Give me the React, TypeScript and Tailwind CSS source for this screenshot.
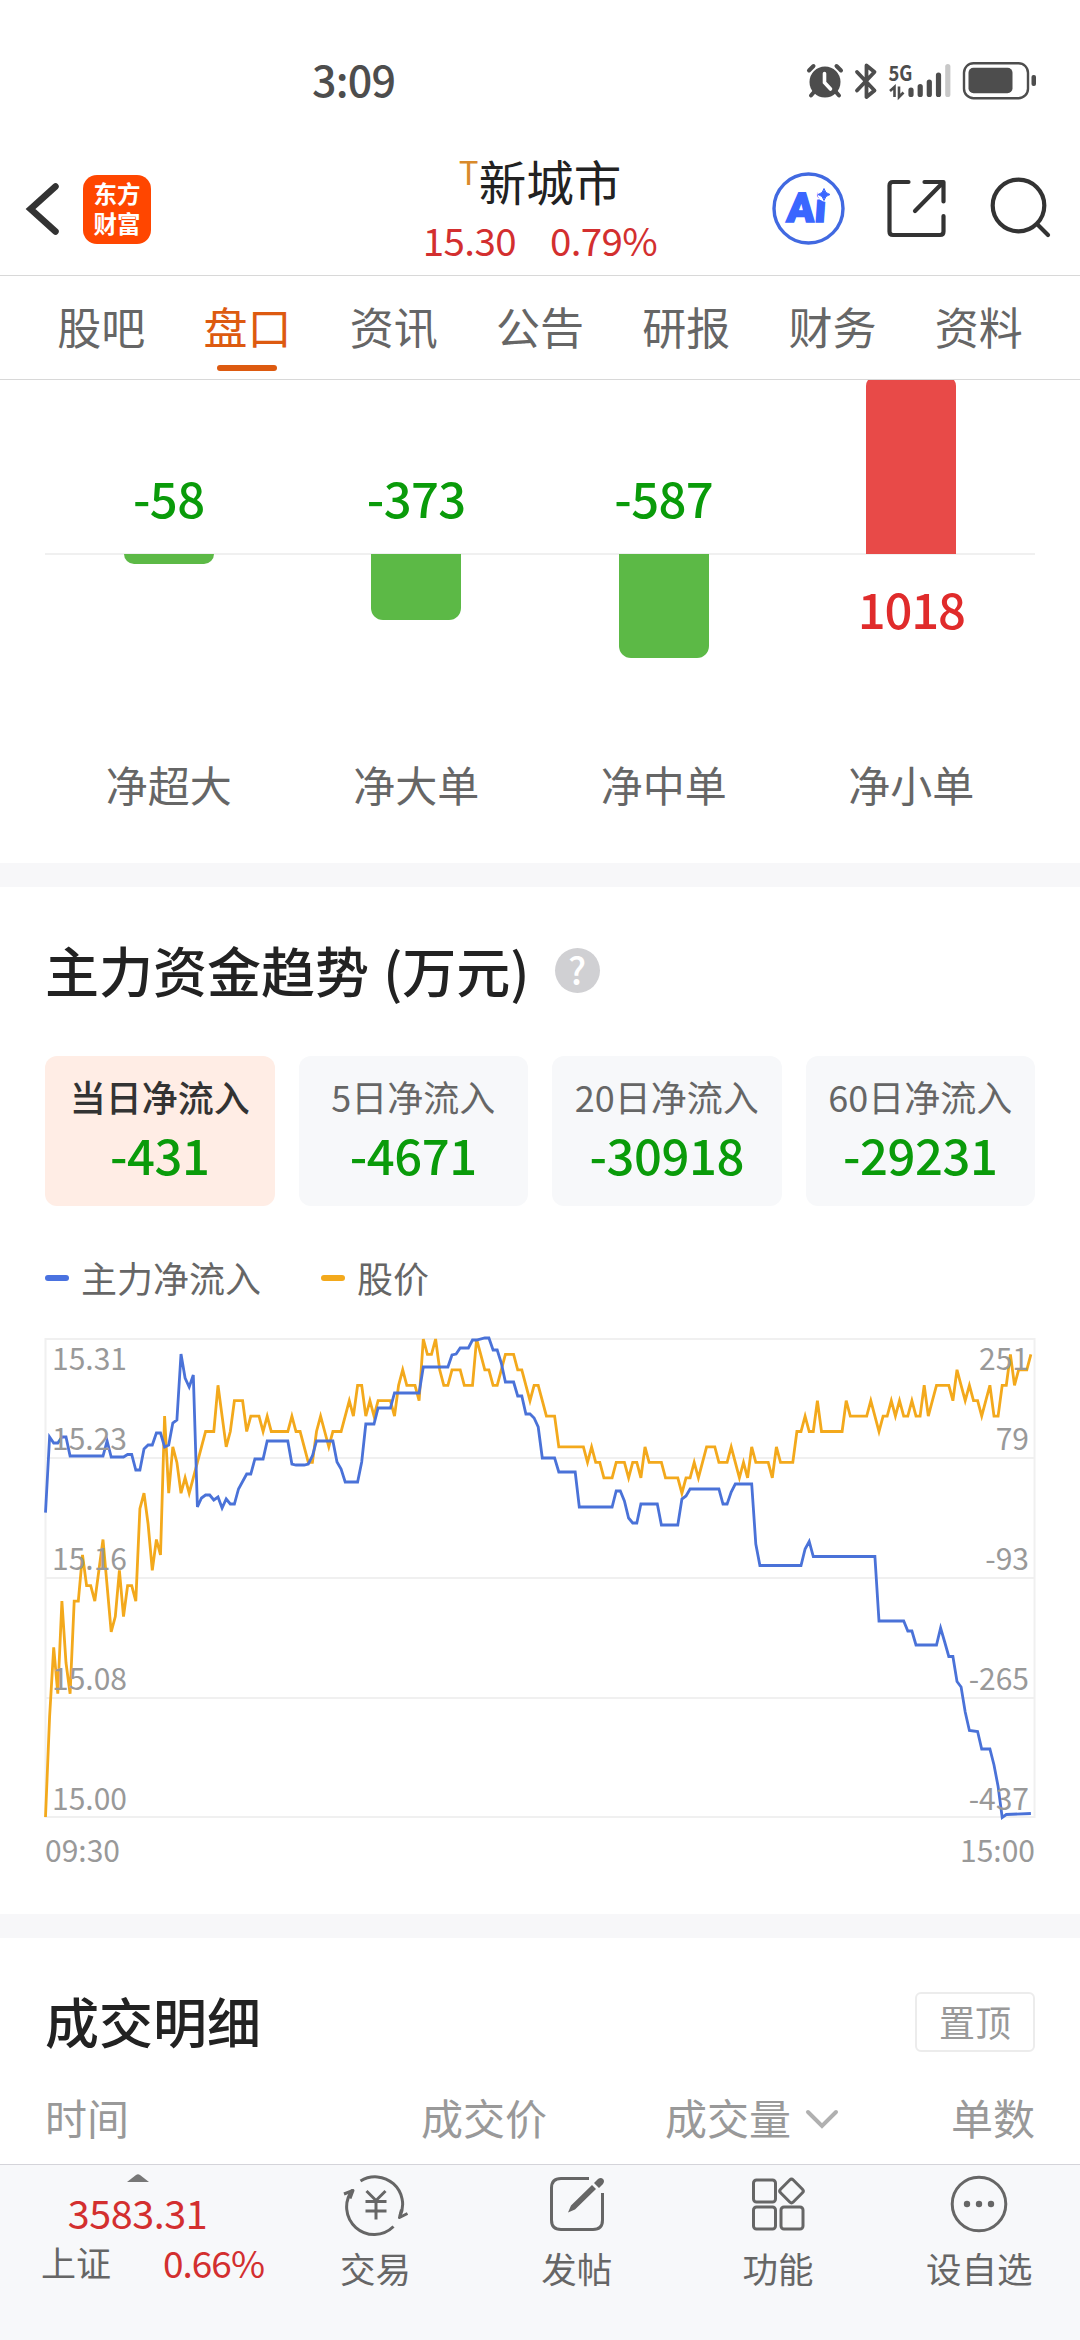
import type { ReactNode } from "react";

const tabs = ["股吧", "盘口", "资讯", "公告", "研报", "财务", "资料"];

const orders = [
  { label: "净超大", value: -58, bar: "h-[10px]" },
  { label: "净大单", value: -373, bar: "h-[66px]" },
  { label: "净中单", value: -587, bar: "h-[104px]" },
  { label: "净小单", value: 1018, bar: "h-[178px]" },
];

const periods = [
  { label: "当日净流入", value: "-431" },
  { label: "5日净流入", value: "-4671" },
  { label: "20日净流入", value: "-30918" },
  { label: "60日净流入", value: "-29231" },
];

// [minute, ticks below the day's high]
const price: number[][] = [
  [0, 31], [1, 24.5], [2, 20], [3, 23], [4, 17], [5, 21], [6, 23], [7, 17], [8, 17], [9, 14], [10, 16], [11, 16],
  [12, 17], [13, 15], [14, 13], [15, 16], [16, 19], [17, 18], [18, 15], [19, 18], [20, 16], [21, 16], [22, 17],
  [23, 11], [24, 10], [25, 12], [26, 15], [27, 13], [28, 14], [29, 5], [30, 10], [31, 7], [32, 8], [33, 10],
  [34, 9], [35, 10], [36, 9], [37, 8], [38, 7], [39, 6], [41, 6], [42, 3], [43, 5], [44, 7], [45, 6], [46, 4],
  [48, 4], [49, 6], [50, 5], [52, 5], [53, 6], [54, 5], [55, 6], [59, 6], [60, 5], [61, 6], [62, 6], [63, 7],
  [64, 8], [65, 8], [66, 6], [67, 5], [68, 6], [69, 7], [70, 6], [72, 6], [73, 5], [74, 4], [75, 5], [76, 3],
  [77, 3], [78, 5], [79, 4], [80, 5], [81, 4], [84, 4], [85, 5], [86, 3], [87, 2], [88, 3], [90, 3], [91, 4],
  [92, 0], [93, 1], [94, 1], [95, 0], [96, 2], [97, 3], [98, 3], [99, 2], [101, 2], [102, 3], [104, 3], [105, 0],
  [106, 1], [107, 2], [108, 2], [109, 3], [110, 3], [111, 2], [112, 1], [114, 1], [115, 2], [116, 2], [117, 3],
  [118, 4], [119, 3], [120, 3], [121, 4], [122, 5], [124, 5], [125, 7], [131, 7], [132, 8], [133, 7], [134, 8],
  [135, 8], [136, 9], [138, 9], [139, 8], [141, 8], [142, 9], [143, 8], [144, 8], [145, 9], [146, 7], [147, 8],
  [150, 8], [151, 9], [154, 9], [155, 10], [156, 9], [157, 9], [158, 8], [159, 9], [160, 8], [161, 7], [163, 7],
  [164, 8], [166, 8], [167, 7], [168, 8], [169, 9], [170, 8], [171, 9], [172, 7], [173, 8], [176, 8], [177, 9],
  [178, 7], [179, 8], [182, 8], [183, 6], [184, 6], [185, 5], [186, 6], [187, 6], [188, 4], [189, 6], [194, 6],
  [195, 4], [196, 5], [200, 5], [201, 4], [202, 5], [203, 6], [204, 5], [205, 5], [206, 4], [207, 5], [208, 4],
  [209, 5], [210, 5], [211, 4], [212, 5], [213, 5], [214, 3], [215, 5], [216, 4], [217, 3], [220, 3], [221, 4],
  [222, 2], [223, 3], [224, 4], [225, 3], [226, 4], [227, 4], [228, 5], [229, 4], [230, 3], [231, 5], [232, 5],
  [233, 3], [234, 3], [235, 1], [236, 3], [237, 2], [239, 2], [240, 1],
];

// [minute, offset from the top of the plot]
const flow: number[][] = [
  [0, 173.7], [1, 98], [2, 104], [3, 104], [4, 98], [5, 98], [6, 117], [14, 117], [15, 102], [16, 118], [19, 118],
  [20, 115.5], [21, 115.5], [22, 131], [23, 131], [24, 110], [25, 106], [26, 106], [27, 94], [28, 94], [29, 108],
  [30, 106], [31, 84], [32, 81], [33, 15], [34, 39], [35, 48], [36, 36], [37, 168], [38, 159], [39, 156],
  [40, 156], [41, 161], [42, 158], [43, 169], [44, 160], [45, 165], [46, 165], [47, 150], [49, 135], [50, 135],
  [51, 120], [53, 120], [54, 102], [59, 102], [60, 125], [61, 126], [63, 126], [64, 125], [65, 117], [66, 102],
  [70, 102], [71, 123], [72, 130], [73, 143], [76, 143], [77, 123], [78, 85], [80, 85], [81, 69], [84, 69],
  [85, 54], [91, 54], [92, 28], [98, 28], [99, 16], [100, 15], [101, 9], [103, 9], [104, 1], [105, 1], [107, -1],
  [108, -1], [109, 11], [110, 11], [111, 24], [112, 43], [114, 43], [115, 57], [116, 57], [117, 75], [118, 75],
  [119, 79], [120, 88], [121, 119], [124, 119], [125, 133], [129, 133], [130, 168], [138, 168], [139, 152],
  [140, 152], [141, 162], [142, 179], [143, 184], [144, 184], [145, 165], [149, 165], [150, 186], [154, 186],
  [155, 160], [156, 157], [157, 150], [164, 150], [165, 165], [166, 165], [167, 153], [168, 145], [172, 145],
  [173, 205], [174, 226.5], [184, 226.5], [185, 210], [186, 202.5], [187, 217.5], [202, 217.5], [203, 282],
  [209, 282], [210, 292], [211, 292], [212, 306], [217, 306], [218, 289], [219, 303], [220, 317.5], [221, 317.5],
  [222, 342.5], [223, 348], [224, 373], [225, 391.5], [227, 392.5], [228, 410], [230, 410], [231, 426],
  [232, 447.5], [233, 478.5], [234, 475.5], [240, 474.5],
];

const STEP = 4.106;
const toPoints = (data: number[][], scale: number) =>
  data.map(([i, v]) => `${(i * STEP + 1.5).toFixed(1)},${(v * scale + 4).toFixed(1)}`).join(" ");

const axis = [
  { left: "15.31", right: "251", y: 35 },
  { left: "15.23", right: "79", y: 115 },
  { left: "15.16", right: "-93", y: 235 },
  { left: "15.08", right: "-265", y: 355 },
  { left: "15.00", right: "-437", y: 475 },
];

function StatusBar() {
  return (
    <div className="flex h-[110px] shrink-0 items-start justify-between pl-[312px] pr-[42px]">
      <span className="mt-[53px] text-[43px] leading-[50px] font-medium tracking-[-0.8px] text-[#4d4d4d]">3:09</span>
      <svg className="mt-[58px]" width="232" height="46" viewBox="806 58 232 46" fill="none">
        <g stroke="#4d4d4d" strokeLinecap="round">
          <circle cx="825" cy="82" r="15.5" fill="#4d4d4d" stroke="none" />
          <path d="M809 70.500l4.500-4.500M841 70.500l-4.500-4.500" strokeWidth="4" />
          <path d="M814 92l-3 3.500M836 92l3 3.500" strokeWidth="4" />
          <path d="M824.500 73.500v9l6 6.500" stroke="#fff" strokeWidth="3.600" />
          <path d="M857 72l17.500 18.500-8 6.500V65.500l8 6.500L857 90.500" strokeWidth="3.800" strokeLinejoin="round" />
        </g>
        <text x="888.500" y="80.500" fontSize="21" fontWeight="700" fill="#4d4d4d" textLength="24" lengthAdjust="spacingAndGlyphs">5G</text>
        <path d="M890 91l4.500-4V97M899 86.500V97l4.500-4.500" stroke="#4d4d4d" strokeWidth="2.600" />
        <g strokeWidth="5.200" strokeLinecap="round" stroke="#4d4d4d">
          <path d="M911 90v4.500M920.200 86.500v8M929.300 82v12.500M938.500 75v19.500" />
          <path d="M947.800 66.500v28" stroke="#c8c8c8" />
        </g>
        <rect x="964" y="63.200" width="64" height="35" rx="9.500" stroke="#4d4d4d" strokeWidth="2.400" />
        <rect x="968.500" y="67.800" width="44" height="25.500" rx="5" fill="#4d4d4d" />
        <rect x="1031.500" y="75" width="4.500" height="11" rx="2" fill="#4d4d4d" />
      </svg>
    </div>
  );
}

function Header() {
  return (
    <header className="grid h-[166px] shrink-0 grid-cols-[1fr_236px_1fr] border-b border-[#d8d8d8]">
      <div className="flex items-start pl-[24px]">
        <svg className="mt-[68px]" width="38" height="62" viewBox="0 0 38 62" fill="none">
          <path d="M31.500 8.500L6.500 31 31.500 53.500" stroke="#333" strokeWidth="6.500" strokeLinecap="round" strokeLinejoin="miter" />
        </svg>
        <div className="mt-[65px] ml-[21px] flex h-[69px] w-[68px] flex-col items-center justify-center rounded-[14px] bg-[#ff4600] pb-[3px] text-[23.5px] leading-[30px] font-bold text-white">
          <span>东方</span>
          <span>财富</span>
        </div>
      </div>
      <div className="flex flex-col items-center">
        <div className="mt-[41px] flex h-[60px] items-start">
          <span className="mt-[2px] text-[33px] leading-[36px] text-[#d98a2b]">T</span>
          <span className="text-[47.5px] leading-[60px] text-[#222]">新城市</span>
        </div>
        <div className="mt-[4px] flex justify-between gap-[34px] text-[38.5px] leading-[48px] tracking-[-0.6px] whitespace-nowrap text-[#d32f2f]">
          <span>15.30</span>
          <span>0.79%</span>
        </div>
      </div>
      <div className="flex items-start justify-end pr-[26px]">
        <svg className="mt-[60px]" width="286" height="78" viewBox="768 170 286 78" fill="none">
          <circle cx="808.500" cy="208.500" r="34.500" stroke="#4169e1" strokeWidth="3.400" />
          <text x="0" y="0" transform="translate(786 222) skewX(-4)" fontSize="41" fontWeight="900" fill="#3a66ff" stroke="#3a66ff" strokeWidth="1.500" className="font-[Roboto]">Ai</text>
          <circle cx="826" cy="193.500" r="8.500" fill="#fff" />
          <path d="M824 188.500q1 5 6 6-5 1-6 6-1-5-6-6 5-1 6-6z" fill="#3a66ff" stroke="#3a66ff" />
          <g stroke="#333" strokeWidth="4.200" strokeLinecap="round" strokeLinejoin="round">
            <path d="M908.500 182H893q-3.500 0-3.500 3.500v46q0 3.500 3.500 3.500h47q3.500 0 3.500-3.500V216" />
            <path d="M924.500 182h19v19.500M942 183.500L915 211" />
            <circle cx="1018.500" cy="205.500" r="25.800" />
            <path d="M1038 225l10 10" />
          </g>
        </svg>
      </div>
    </header>
  );
}

function Tabs() {
  return (
    <nav className="grid h-[104px] shrink-0 grid-cols-7 border-b border-[#d8d8d8] px-[28px] text-[44px]">
      {tabs.map((tab) => (
        <div key={tab} className={`flex flex-col items-center pt-[20px] ${tab === "盘口" ? "text-[#dd5a10]" : "text-[#666]"}`}>
          <span className="leading-[60px]">{tab}</span>
          {tab === "盘口" && <span className="mt-[9px] h-[6px] w-[60px] rounded-full bg-[#dd5a10]" />}
        </div>
      ))}
    </nav>
  );
}

function OrderBars() {
  return (
    <section className="grid h-[483px] shrink-0 grid-cols-4 overflow-hidden px-[45px]">
      {orders.map((o) => (
        <div key={o.label} className="flex flex-col items-center">
          <div className="flex h-[175px] w-full flex-col items-center justify-end border-b-2 border-[#f0f0f0]">
            {o.value > 0 ? (
              <div className={`-mb-[1px] w-[90px] shrink-0 rounded-t-[10px] bg-[#e84a48] ${o.bar}`} />
            ) : (
              <span className="mb-[24px] text-[49px] leading-[64px] font-medium tracking-[-0.6px] text-[#0a9b0a]">{o.value}</span>
            )}
          </div>
          <div className="flex h-[195px] flex-col items-center">
            {o.value > 0 ? (
              <span className="mt-[21px] text-[49px] leading-[64px] font-medium tracking-[-1.2px] text-[#e02b2b]">{o.value}</span>
            ) : (
              <div className={`-mt-[1px] w-[90px] rounded-b-[12px] bg-[#5cb946] ${o.bar}`} />
            )}
          </div>
          <span className="mt-[4px] text-[42px] leading-[60px] text-[#666]">{o.label}</span>
        </div>
      ))}
    </section>
  );
}

function TrendChart() {
  return (
    <svg className="mt-[30px] ml-[44px] block" width="992" height="488" viewBox="0 0 992 488" fill="none">
      <g stroke="#f0f0f0" strokeWidth="2">
        <rect x="1.500" y="4" width="989" height="478" />
        <path d="M1 123h990M1 243h990M1 363h990" />
      </g>
      <polyline points={toPoints(price, 15.42)} stroke="#f3a91c" strokeWidth="2.800" />
      <polyline points={toPoints(flow, 1)} stroke="#4a72d8" strokeWidth="2.800" />
      <g fill="#999" fontSize="30">
        {axis.map((a) => (
          <g key={a.left}>
            <text x="8" y={a.y}>{a.left}</text>
            <text x="985" y={a.y} textAnchor="end">{a.right}</text>
          </g>
        ))}
      </g>
    </svg>
  );
}

function Trend() {
  return (
    <section className="flex h-[1027px] shrink-0 flex-col">
      <div className="mt-[43px] flex h-[80px] items-center px-[45px]">
        <h2 className="text-[54px] leading-[80px] font-medium whitespace-pre text-[#222]">
          主力资金趋势<span className="ml-[2px]"> (万元)</span>
        </h2>
        <span className="ml-[25px] flex h-[45px] w-[45px] items-center justify-center rounded-full bg-[#d0d0d3] pb-[3px] text-[37px] leading-[40px] font-medium text-white">?</span>
      </div>
      <div className="mt-[46px] grid grid-cols-4 gap-[24px] px-[45px]">
        {periods.map((p, i) => (
          <div key={p.label} className={`flex h-[150px] flex-col items-center rounded-[12px] ${i === 0 ? "bg-[#ffede5]" : "bg-[#f7f8fa]"}`}>
            <span className={`mt-[15px] text-[36px] leading-[50px] whitespace-nowrap ${i === 0 ? "font-medium text-[#333]" : "text-[#666]"}`}>{p.label}</span>
            <span className="mt-[3px] text-[49px] leading-[60px] font-medium tracking-[-0.4px] text-[#0a9b0a]">{p.value}</span>
          </div>
        ))}
      </div>
      <div className="mt-[44px] flex h-[55px] items-center px-[45px] text-[36px] leading-[55px] text-[#666]">
        <i className="mr-[12px] h-[6px] w-[24px] rounded-[3px] bg-[#4a72e0]" />
        主力净流入
        <i className="mr-[12px] ml-[60px] h-[6px] w-[24px] rounded-[3px] bg-[#f3a91c]" />
        股价
      </div>
      <TrendChart />
      <div className="mt-[1px] flex justify-between px-[45px] text-[30px] leading-[50px] text-[#999]">
        <span>09:30</span>
        <span>15:00</span>
      </div>
    </section>
  );
}

function Deals() {
  return (
    <section className="h-[226px] shrink-0 px-[45px]">
      <div className="flex items-start justify-between">
        <h2 className="mt-[43px] text-[54px] leading-[80px] font-medium text-[#222]">成交明细</h2>
        <span className="mt-[54px] flex h-[60px] w-[120px] items-center justify-center rounded-[6px] border-2 border-[#ececec] pb-[3px] text-[36px] text-[#999]">置顶</span>
      </div>
      <div className="mt-[26px] flex text-[42px] leading-[60px] text-[#999]">
        <span className="w-[376px]">时间</span>
        <span className="w-[244px]">成交价</span>
        <span className="flex flex-1 items-center">
          成交量
          <svg className="ml-[14px] mt-[3px]" width="34" height="22" viewBox="0 0 34 22" fill="none">
            <path d="M3 4l14 14L31 4" stroke="#b0b0b0" strokeWidth="4" strokeLinecap="round" />
          </svg>
        </span>
        <span>单数</span>
      </div>
    </section>
  );
}

function NavItem({ label, children }: { label: string; children: ReactNode }) {
  return (
    <div className="flex flex-1 flex-col items-center">
      <svg className="mt-[7px]" width="66" height="64" viewBox="-33 -32 66 64" fill="none" stroke="#666" strokeWidth="3">
        {children}
      </svg>
      <span className="mt-[7px] text-[35.5px] leading-[50px] text-[#666]">{label}</span>
    </div>
  );
}

function BottomBar() {
  return (
    <footer className="flex h-[176px] shrink-0 border-t border-[#d4d4da] bg-[#f7f8fa]">
      <div className="flex w-[275px] shrink-0 flex-col items-center">
        <svg className="mt-[9px]" width="22" height="8" viewBox="0 0 22 8">
          <path d="M0 8L9 1q2-1.500 4 0l9 7z" fill="#777" />
        </svg>
        <span className="mt-[5px] text-[39.5px] leading-[50px] tracking-[-0.4px] text-[#d32f2f]">3583.31</span>
        <div className="flex w-full items-center pl-[41px] leading-[50px]">
          <span className="text-[35px] text-[#666]">上证</span>
          <span className="ml-[52px] text-[37px] tracking-[-1px] text-[#d32f2f]">0.66%</span>
        </div>
      </div>
      <NavItem label="交易">
        <path d="M-15.500-23A27.500 27.500 0 0 1 24 12M17.500 22.500A27.500 27.500 0 0 1-23.500-14" />
        <path d="M-32-10l9-3.500-3 8M31.500 9.500l-8 4 2-8" strokeLinejoin="round" />
        <path d="M-9.500-13L0-3.500 9.500-13M0-3v18.500M-10.500-2.500h21M-10.500 7h21" />
      </NavItem>
      <NavItem label="发帖">
        <path d="M12-25.500h-28q-9.500 0-9.500 9.500v32q0 9.500 9.500 9.500h32q9.500 0 9.500-9.500v-27" />
        <path d="M-9 8.500l3-7L15-19l4 4L-2 5.500zM17-21l4-4q3-2 5 0t0 5l-4 4z" fill="#666" stroke="none" />
      </NavItem>
      <NavItem label="功能">
        <rect x="-24.500" y="-24" width="22" height="22" rx="3" />
        <rect x="-24.500" y="3" width="22" height="22" rx="3" />
        <rect x="3" y="3" width="22" height="22" rx="3" />
        <rect x="4.500" y="-22" width="18" height="18" rx="2.500" transform="rotate(45 13.500 -13)" />
      </NavItem>
      <NavItem label="设自选">
        <circle r="26.800" />
        <g fill="#666" stroke="none">
          <circle cx="-12" r="3.200" />
          <circle r="3.200" />
          <circle cx="12" r="3.200" />
        </g>
      </NavItem>
    </footer>
  );
}

export default function App() {
  return (
    <div className="flex h-[2340px] w-[1080px] flex-col overflow-hidden bg-white font-['Noto_Sans_CJK_SC',sans-serif]">
      <StatusBar />
      <Header />
      <Tabs />
      <OrderBars />
      <div className="h-[24px] shrink-0 bg-[#f7f7f9]" />
      <Trend />
      <div className="h-[24px] shrink-0 bg-[#f7f7f9]" />
      <Deals />
      <BottomBar />
    </div>
  );
}
